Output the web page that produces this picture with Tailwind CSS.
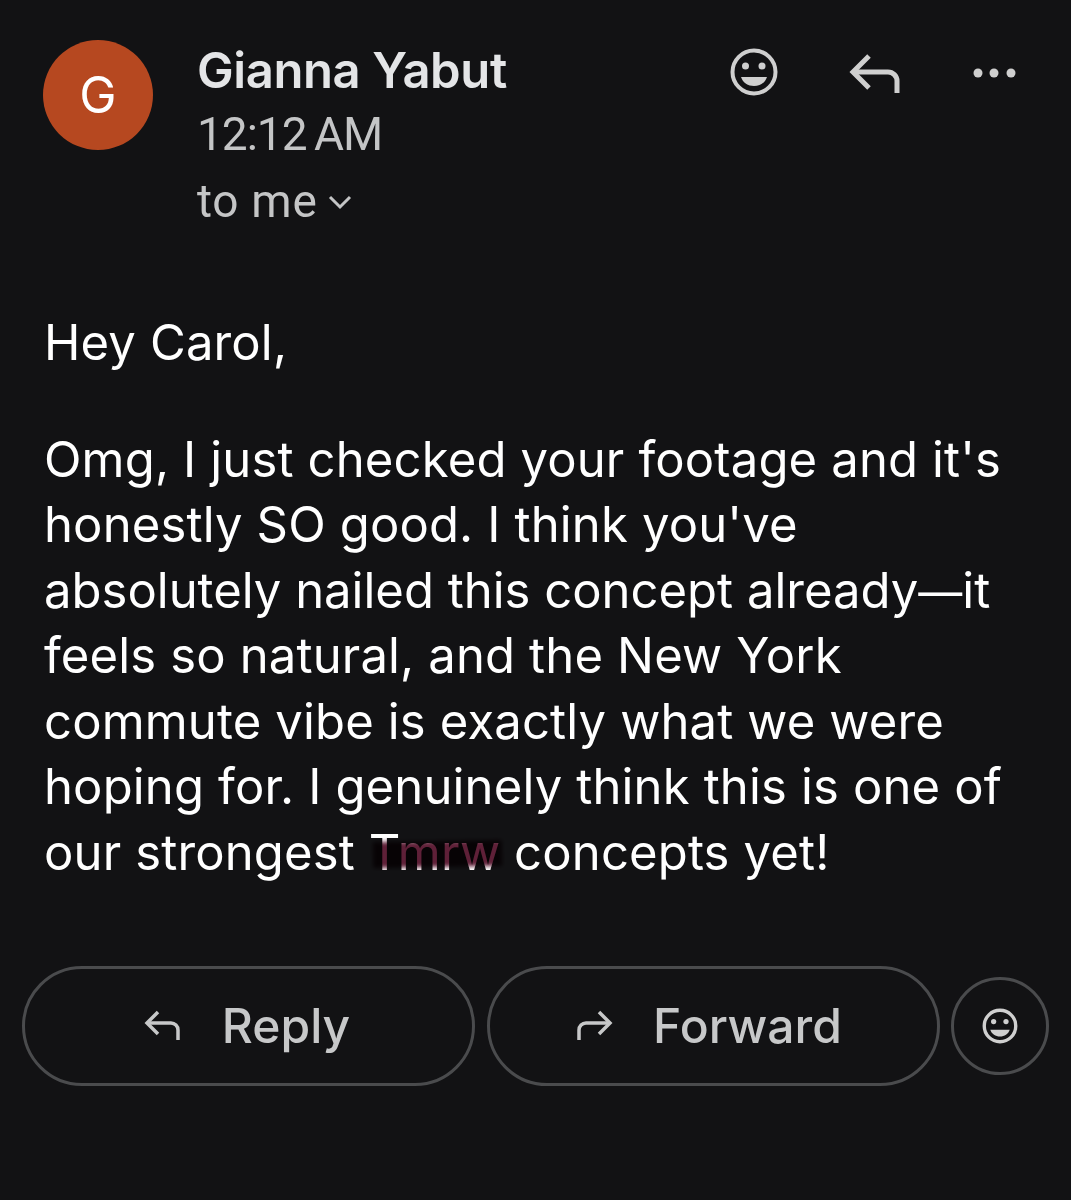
<!DOCTYPE html>
<html>
<head>
<meta charset="utf-8">
<script src="https://cdn.jsdelivr.net/npm/@tailwindcss/browser@4"></script>
</head>
<body class="bg-[#121214]">
<div class="w-[1071px] h-[1200px] bg-[#121214] overflow-hidden font-['Roboto',sans-serif]">
  <header class="flex pl-[43px] pt-[40px] h-[310px]">
    <div class="w-[110px] h-[110px] rounded-full bg-[#b64820] flex items-center justify-center text-white text-[50px] leading-none shrink-0 font-['Inter',sans-serif]">G</div>
    <div class="ml-[44px] w-[489px]">
      <div class="text-[49px] leading-[62px] font-semibold text-[#e4e5e7] font-['Inter',sans-serif] tracking-[-0.4px]">Gianna Yabut</div>
      <div class="text-[46px] leading-[62px] mt-[1px] text-[#c4c5c6] tracking-[-1px] [word-spacing:-3px]">12:12 AM</div>
      <div class="flex items-center mt-[5px] h-[62px] text-[46px] text-[#c4c5c6] tracking-[0.7px]">to me
        <svg class="ml-[11px] mt-[2px]" width="24" height="16" viewBox="0 0 24 16" fill="none" stroke="#c4c5c6" stroke-width="3"><path d="M2 3l10 10L22 3"/></svg>
      </div>
    </div>
    <div class="flex ml-[44px] h-[66px] items-start">
      <svg class="mt-[8px]" width="48" height="48" viewBox="0 0 48 48" fill="none"><circle cx="24" cy="24" r="21.5" stroke="#cfcfcf" stroke-width="4"/><circle cx="15.5" cy="18" r="3.5" fill="#cfcfcf"/><circle cx="32" cy="18" r="3.5" fill="#cfcfcf"/><path d="M11 29h26c-2 6-7 9-13 9s-11-3-13-9z" fill="#cfcfcf"/></svg>
      <svg class="ml-[71px] mt-[14px]" width="52" height="40" viewBox="0 0 52 40" fill="none" stroke="#cfcfcf" stroke-width="5"><path d="M20 2L4 18l16 16"/><path d="M4 18h35a9 9 0 0 1 9 9v12"/></svg>
      <svg class="ml-[71px] mt-[27px]" width="44" height="12" viewBox="0 0 44 12" fill="#cfcfcf"><circle cx="6" cy="6" r="4.5"/><circle cx="22" cy="6" r="4.5"/><circle cx="39" cy="6" r="4.5"/></svg>
    </div>
  </header>
  <main class="pl-[44px] pr-[40px] text-white text-[49px] leading-[65.5px] tracking-[0.15px] font-['Inter',sans-serif]">
    <p class="mb-[51px]">Hey Carol,</p>
    <p class="whitespace-nowrap">Omg, I just checked your footage and it's<br>honestly SO good. I think you've<br><span class="tracking-[0px]">absolutely nailed this concept already<span class="text-[44px] leading-[0px]">—</span>it</span><br>feels so natural, and the New York<br>commute vibe is exactly what we were<br>hoping for. I genuinely think this is one of<br>our strongest <span class="relative inline-block">Tmrw<span class="absolute left-[4px] right-[-2px] top-[21px] h-[26px] bg-[#5f2038] mix-blend-multiply blur-[2px] -rotate-1"></span></span> concepts yet!</p>
  </main>
  <footer class="flex items-center pl-[22px] mt-[81px]">
    <button class="w-[453px] h-[120px] rounded-full border-[3px] border-[#4a4b4d] flex items-center justify-center text-[#c7c8c9] text-[48px] font-medium font-['Inter',sans-serif]">
      <svg class="-ml-[3px]" width="38" height="32" viewBox="0 0 38 32" fill="none" stroke="#c7c8c9" stroke-width="3.5"><path d="M14 2L3 13l11 11"/><path d="M3 13h24a7 7 0 0 1 7 7v10"/></svg>
      <span class="ml-[40px]">Reply</span>
    </button>
    <button class="ml-[12px] w-[453px] h-[120px] rounded-full border-[3px] border-[#4a4b4d] flex items-center justify-center text-[#c7c8c9] text-[48px] font-medium font-['Inter',sans-serif]">
      <svg class="-ml-[10px]" width="38" height="32" viewBox="0 0 38 32" fill="none" stroke="#c7c8c9" stroke-width="3.5"><path d="M24 2l11 11-11 11"/><path d="M35 13H11a7 7 0 0 0-7 7v10"/></svg>
      <span class="ml-[40px]">Forward</span>
    </button>
    <button class="ml-[11px] w-[98px] h-[98px] rounded-full border-[3px] border-[#4a4b4d] flex items-center justify-center">
      <svg width="36" height="36" viewBox="0 0 48 48" fill="none"><circle cx="24" cy="24" r="21" stroke="#cfcfcf" stroke-width="4.5"/><circle cx="15.5" cy="18" r="3.5" fill="#cfcfcf"/><circle cx="32" cy="18" r="3.5" fill="#cfcfcf"/><path d="M11 29h26c-2 6-7 9-13 9s-11-3-13-9z" fill="#cfcfcf"/></svg>
    </button>
  </footer>
</div>
</body>
</html>
